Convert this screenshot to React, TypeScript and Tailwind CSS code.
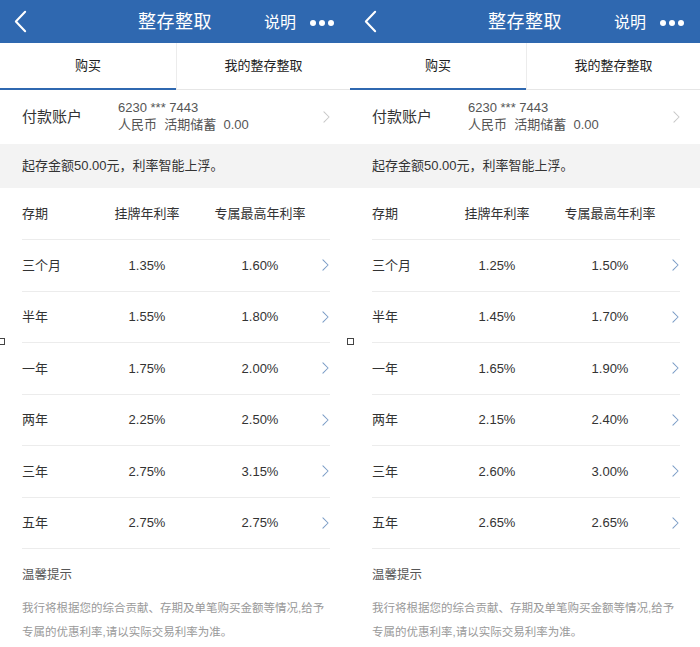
import React from "react";

type Rate = { term: string; listed: string; best: string };

const LEFT: Rate[] = [
  { term: "三个月", listed: "1.35%", best: "1.60%" },
  { term: "半年", listed: "1.55%", best: "1.80%" },
  { term: "一年", listed: "1.75%", best: "2.00%" },
  { term: "两年", listed: "2.25%", best: "2.50%" },
  { term: "三年", listed: "2.75%", best: "3.15%" },
  { term: "五年", listed: "2.75%", best: "2.75%" },
];

const RIGHT: Rate[] = [
  { term: "三个月", listed: "1.25%", best: "1.50%" },
  { term: "半年", listed: "1.45%", best: "1.70%" },
  { term: "一年", listed: "1.65%", best: "1.90%" },
  { term: "两年", listed: "2.15%", best: "2.40%" },
  { term: "三年", listed: "2.60%", best: "3.00%" },
  { term: "五年", listed: "2.65%", best: "2.65%" },
];

function Chevron({ className }: { className: string }) {
  return (
    <svg viewBox="0 0 8 14" className={className} fill="none">
      <path d="M1 1l6 6-6 6" stroke="currentColor" strokeWidth="1.2" strokeLinecap="round" strokeLinejoin="round" />
    </svg>
  );
}

function Phone({ rates }: { rates: Rate[] }) {
  return (
    <div className="w-[350px] shrink-0 bg-white">
      {/* nav bar */}
      <div className="relative flex h-[43px] items-center bg-[#2f68b0] text-white">
        <svg viewBox="0 0 14 24" className="ml-[14px] h-[23px] w-[13px]" fill="none">
          <path d="M12 1.5L2 12l10 10.5" stroke="white" strokeWidth="2.2" strokeLinecap="round" strokeLinejoin="round" />
        </svg>
        <div className="absolute left-[138px] top-[10px] text-[18px] leading-[24px] tracking-[0.5px]">整存整取</div>
        <div className="absolute left-[264px] top-[12px] text-[16px] leading-[22px]">说明</div>
        <div className="absolute left-[310px] top-[20px] flex gap-[3px]">
          <span className="h-[6px] w-[6px] rounded-full bg-white" />
          <span className="h-[6px] w-[6px] rounded-full bg-white" />
          <span className="h-[6px] w-[6px] rounded-full bg-white" />
        </div>
      </div>

      {/* tabs */}
      <div className="flex h-[47px] border-b border-[#e6e6e6] text-[13px] text-[#222]">
        <div className="relative flex w-[176px] items-center justify-center">
          购买
          <div className="absolute bottom-[-1px] left-0 right-0 h-[2px] bg-[#2f68b0]" />
        </div>
        <div className="flex flex-1 items-center justify-center border-l border-[#ececec]">我的整存整取</div>
      </div>

      {/* account */}
      <div className="flex h-[54px] items-center pl-[22px] pr-[20px]">
        <div className="w-[96px] text-[15px] text-[#333]">付款账户</div>
        <div className="flex-1 pb-[2px] text-[13px] leading-[17px] text-[#555]">
          <div>6230 *** 7443</div>
          <div>人民币&nbsp;&nbsp;活期储蓄&nbsp;&nbsp;0.00</div>
        </div>
        <Chevron className="h-[12px] w-[7px] text-[#c8c8c8]" />
      </div>

      <div className="flex h-[44px] items-center bg-[#f3f3f3] px-[22px] text-[13px] text-[#333]">
        起存金额50.00元，利率智能上浮。
      </div>

      {/* table */}
      <div className="px-[22px] pr-[20px]">
        <div className="flex h-[52px] items-end border-b border-[#ececec] pb-[16px] text-[13px] text-[#333]">
          <div className="w-[70px]">存期</div>
          <div className="w-[110px] text-center">挂牌年利率</div>
          <div className="w-[116px] text-center">专属最高年利率</div>
        </div>
        {rates.map((r) => (
          <div key={r.term} className="flex h-[51.5px] items-center border-b border-[#ececec] text-[13px] text-[#333]">
            <div className="w-[70px]">{r.term}</div>
            <div className="w-[110px] text-center">{r.listed}</div>
            <div className="w-[116px] text-center">{r.best}</div>
            <div className="flex flex-1 justify-end pr-[1px]">
              <Chevron className="h-[12px] w-[7px] text-[#7a9cc6]" />
            </div>
          </div>
        ))}
      </div>

      {/* tips */}
      <div className="px-[22px] pt-[17px]">
        <div className="text-[12.5px] text-[#555]">温馨提示</div>
        <div className="mt-[11px] text-[11.5px] leading-[24px] text-[#999]">
          我行将根据您的综合贡献、存期及单笔购买金额等情况,给予专属的优惠利率,请以实际交易利率为准。
        </div>
      </div>
    </div>
  );
}

export default function App() {
  return (
    <div
      className="relative flex h-[647px] w-[700px] overflow-hidden bg-white"
      style={{ fontFamily: '"Liberation Sans", "Noto Sans CJK SC", sans-serif' }}
    >
      <Phone rates={LEFT} />
      <Phone rates={RIGHT} />
      <div className="absolute left-0 top-[338px] h-[7px] w-[5px] border border-l-0 border-[#444]" />
      <div className="absolute left-[347px] top-[338px] h-[7px] w-[7px] border border-[#444] bg-white" />
    </div>
  );
}
